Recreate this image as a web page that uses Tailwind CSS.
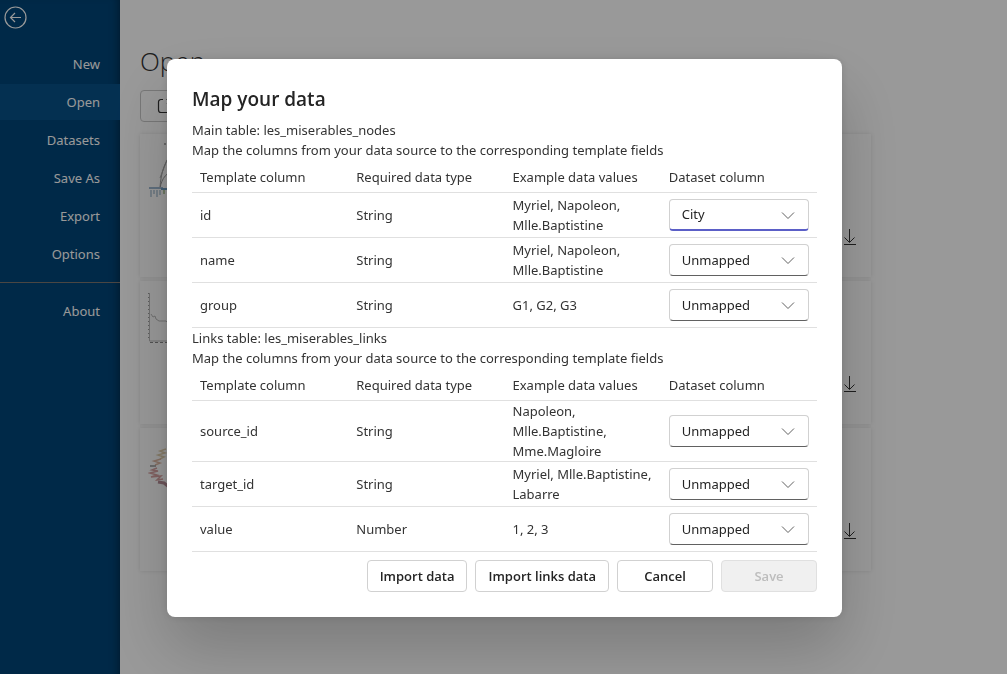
<!DOCTYPE html>
<html lang="en">
<head>
<meta charset="utf-8">
<title>Map your data</title>
<meta name="viewport" content="width=device-width, initial-scale=1">
<script src="https://cdn.jsdelivr.net/npm/@tailwindcss/browser@4"></script>
</head>
<body class="font-['Noto_Sans','Open_Sans',sans-serif] text-[13px] leading-5 text-[#333] bg-white">
<div class="flex min-h-screen">
  <nav class="w-[120px] shrink-0 bg-[#004578] text-white shadow-[inset_-8px_0_8px_-6px_rgba(0,0,0,0.35)]">
    <button type="button" aria-label="Back" class="ml-1 mt-1 block h-[26px] w-6">
      <svg class="h-6 w-6" viewBox="0 0 24 24" fill="none" stroke="currentColor" stroke-width="1.2"><circle cx="11.5" cy="12.5" r="10.5"/><path d="M17 12.5H6.500M11 8l-4.500 4.500 4.500 4.500"/></svg>
    </button>
    <ul class="mt-4 flex flex-col gap-0.5 text-right">
      <li><a href="#" class="block py-2 pr-5">New</a></li>
      <li><a href="#" class="block bg-[#085088] py-2 pr-5">Open</a></li>
      <li><a href="#" class="block py-2 pr-5">Datasets</a></li>
      <li><a href="#" class="block py-2 pr-5">Save As</a></li>
      <li><a href="#" class="block py-2 pr-5">Export</a></li>
      <li><a href="#" class="block py-2 pr-5">Options</a></li>
    </ul>
    <hr class="mt-2.5 border-[#7c7570]">
    <a href="#" class="mt-2.5 block py-2 pr-5 text-right">About</a>
  </nav>
  <main class="flex-1 px-5 pt-10">
    <h1 class="font-['Open_Sans',sans-serif] text-[26px] leading-[42px] font-light">Open</h1>
    <button type="button" aria-label="Open file" class="mt-2 flex h-8 w-24 items-center rounded-sm border border-[#c8c8c8] px-4">
      <svg class="h-4 w-4" viewBox="0 0 16 16" fill="none" stroke="currentColor" stroke-width="1.2"><path d="M6 1.500H4A2.500 2.500 0 0 0 1.500 4v8A2.500 2.500 0 0 0 4 14.500h8a2.500 2.500 0 0 0 2.500-2.500V9M9.500 1.500h5v5M14.500 1.500L10 6"/></svg>
    </button>
    <div class="mt-3 flex max-w-[731px] flex-col gap-1">
      <article class="flex h-[143px] items-start justify-between p-2 shadow-[0_0_4px_rgba(0,0,0,0.12)]">
        <svg class="h-[60px] w-[60px]" viewBox="0 0 60 60" fill="none"><path d="M12 46C13 30 16 20 28 5M12 46C14 36 18 30 30 27" stroke="#999"/><path d="M12 36L19 18" stroke="#aaa"/><circle cx="17" cy="2" r="1" fill="#999"/><path d="M1 46h14" stroke="#9fb9d2" stroke-width="2"/><path d="M13 47h8" stroke="#6f9fc4" stroke-width="2"/><path d="M3 48v7M6 48v4M9 48v7M12 48v5" stroke="#c3d3df" stroke-width="2"/><path d="M16 48v4" stroke="#b9cda6" stroke-width="2"/></svg>
        <button type="button" aria-label="Download" class="mt-[87px] mr-[5px]"><svg class="h-4 w-4" viewBox="0 0 16 16" fill="none" stroke="currentColor"><path d="M7.500 0v13M2.500 8.500l5 5 5-5M2 15.500h12"/></svg></button>
      </article>
      <article class="flex h-[143px] items-start justify-between p-2 shadow-[0_0_4px_rgba(0,0,0,0.12)]">
        <svg class="h-[60px] w-[60px]" viewBox="0 0 60 60" fill="none"><path d="M1.500 4v48H60" stroke="#bbb"/><path d="M0.500 4v48" stroke="#999" stroke-dasharray="1 3"/><path d="M2 53.500h58" stroke="#888" stroke-dasharray="3 2"/><path d="M3 25l2 3 2-1 1 3 3 2h7l2 2" stroke="#bbb"/></svg>
        <button type="button" aria-label="Download" class="mt-[87px] mr-[5px]"><svg class="h-4 w-4" viewBox="0 0 16 16" fill="none" stroke="currentColor"><path d="M7.500 0v13M2.500 8.500l5 5 5-5M2 15.500h12"/></svg></button>
      </article>
      <article class="flex h-[143px] items-start justify-between p-2 shadow-[0_0_4px_rgba(0,0,0,0.12)]">
        <svg class="h-[60px] w-[60px]" viewBox="0 0 60 60" fill="none"><path d="M18 13l-6 2 5 2-7 2 6 2-4 2" stroke="#e0cfae" stroke-width="1.5"/><path d="M13 23l-7 2 6 2-5 2" stroke="#dfb9a5" stroke-width="1.5"/><path d="M2 30h6" stroke="#999" stroke-width="1.500"/><path d="M9 32l-5 2 6 1-8 2 7 2-6 2 10-1-4 4 6-1" stroke="#d9a3a3" stroke-width="1.500"/><path d="M10 46l6 1 5 4" stroke="#b78f98" stroke-width="3"/></svg>
        <button type="button" aria-label="Download" class="mt-[87px] mr-[5px]"><svg class="h-4 w-4" viewBox="0 0 16 16" fill="none" stroke="currentColor"><path d="M7.500 0v13M2.500 8.500l5 5 5-5M2 15.500h12"/></svg></button>
      </article>
    </div>
  </main>
</div>

<div class="fixed inset-0 flex items-center justify-center bg-black/40 pt-0.5 pl-0.5">
  <section role="dialog" aria-modal="true" aria-labelledby="dialog-title" class="w-full max-w-[675px] rounded-lg bg-white p-[25px] shadow-[0_0_8px_rgba(0,0,0,0.12),0_32px_64px_rgba(0,0,0,0.2)]">
    <h2 id="dialog-title" class="mb-1.5 font-['Open_Sans',sans-serif] text-[19px] leading-[30px] font-semibold text-[#242424]">Map your data</h2>
    <p>Main table: les_miserables_nodes</p>
    <p>Map the columns from your data source to the corresponding template fields</p>
    <table class="w-full table-fixed border-collapse text-left">
      <thead>
        <tr class="h-8 border-b border-[#e0e0e0]"><th class="px-2 pt-0.5 font-normal">Template column</th><th class="px-2 pt-0.5 font-normal">Required data type</th><th class="px-2 pt-0.5 font-normal">Example data values</th><th class="px-2 pt-0.5 font-normal">Dataset column</th></tr>
      </thead>
      <tbody>
        <tr class="h-[45px] border-b border-[#e0e0e0]">
          <td class="px-2">id</td><td class="px-2">String</td><td class="px-2">Myriel, Napoleon, Mlle.Baptistine</td>
          <td class="px-2"><div class="relative"><select aria-label="Dataset column for id" class="block h-8 w-full appearance-none rounded-sm border border-b-2 border-[#d1d1d1] border-b-[#5b5fc7] bg-white px-3 text-[#242424]"><option>City</option></select><svg class="pointer-events-none absolute top-1.5 right-[11px] h-5 w-5" viewBox="0 0 20 20" fill="none" stroke="#616161"><path d="M4 7.500l6 6 6-6"/></svg></div></td>
        </tr>
        <tr class="h-[45px] border-b border-[#e0e0e0]">
          <td class="px-2">name</td><td class="px-2">String</td><td class="px-2">Myriel, Napoleon, Mlle.Baptistine</td>
          <td class="px-2"><div class="relative"><select aria-label="Dataset column for name" class="block h-8 w-full appearance-none rounded-sm border border-[#d1d1d1] border-b-[#616161] bg-white px-3 text-[#242424]"><option>Unmapped</option></select><svg class="pointer-events-none absolute top-1.5 right-[11px] h-5 w-5" viewBox="0 0 20 20" fill="none" stroke="#616161"><path d="M4 7.500l6 6 6-6"/></svg></div></td>
        </tr>
        <tr class="h-[45px] border-b border-[#e0e0e0]">
          <td class="px-2">group</td><td class="px-2">String</td><td class="px-2">G1, G2, G3</td>
          <td class="px-2"><div class="relative"><select aria-label="Dataset column for group" class="block h-8 w-full appearance-none rounded-sm border border-[#d1d1d1] border-b-[#616161] bg-white px-3 text-[#242424]"><option>Unmapped</option></select><svg class="pointer-events-none absolute top-1.5 right-[11px] h-5 w-5" viewBox="0 0 20 20" fill="none" stroke="#616161"><path d="M4 7.500l6 6 6-6"/></svg></div></td>
        </tr>
      </tbody>
    </table>
    <p>Links table: les_miserables_links</p>
    <p>Map the columns from your data source to the corresponding template fields</p>
    <table class="w-full table-fixed border-collapse text-left">
      <thead>
        <tr class="h-[33px] border-b border-[#e0e0e0]"><th class="px-2 pt-0.5 font-normal">Template column</th><th class="px-2 pt-0.5 font-normal">Required data type</th><th class="px-2 pt-0.5 font-normal">Example data values</th><th class="px-2 pt-0.5 font-normal">Dataset column</th></tr>
      </thead>
      <tbody>
        <tr class="h-[61px] border-b border-[#e0e0e0]">
          <td class="px-2">source_id</td><td class="px-2">String</td><td class="px-2">Napoleon, Mlle.Baptistine, Mme.Magloire</td>
          <td class="px-2"><div class="relative"><select aria-label="Dataset column for source_id" class="block h-8 w-full appearance-none rounded-sm border border-[#d1d1d1] border-b-[#616161] bg-white px-3 text-[#242424]"><option>Unmapped</option></select><svg class="pointer-events-none absolute top-1.5 right-[11px] h-5 w-5" viewBox="0 0 20 20" fill="none" stroke="#616161"><path d="M4 7.500l6 6 6-6"/></svg></div></td>
        </tr>
        <tr class="h-[45px] border-b border-[#e0e0e0]">
          <td class="px-2">target_id</td><td class="px-2">String</td><td class="px-2">Myriel, Mlle.Baptistine, Labarre</td>
          <td class="px-2"><div class="relative"><select aria-label="Dataset column for target_id" class="block h-8 w-full appearance-none rounded-sm border border-[#d1d1d1] border-b-[#616161] bg-white px-3 text-[#242424]"><option>Unmapped</option></select><svg class="pointer-events-none absolute top-1.5 right-[11px] h-5 w-5" viewBox="0 0 20 20" fill="none" stroke="#616161"><path d="M4 7.500l6 6 6-6"/></svg></div></td>
        </tr>
        <tr class="h-[45px] border-b border-[#e0e0e0]">
          <td class="px-2">value</td><td class="px-2">Number</td><td class="px-2">1, 2, 3</td>
          <td class="px-2"><div class="relative"><select aria-label="Dataset column for value" class="block h-8 w-full appearance-none rounded-sm border border-[#d1d1d1] border-b-[#616161] bg-white px-3 text-[#242424]"><option>Unmapped</option></select><svg class="pointer-events-none absolute top-1.5 right-[11px] h-5 w-5" viewBox="0 0 20 20" fill="none" stroke="#616161"><path d="M4 7.500l6 6 6-6"/></svg></div></td>
        </tr>
      </tbody>
    </table>
    <div class="mt-2 flex justify-end gap-2 font-['Open_Sans',sans-serif] font-semibold text-[#242424]">
      <button type="button" class="h-8 min-w-24 rounded-sm border border-[#d1d1d1] px-3">Import data</button>
      <button type="button" class="h-8 min-w-24 rounded-sm border border-[#d1d1d1] px-3">Import links data</button>
      <button type="button" class="h-8 min-w-24 rounded-sm border border-[#d1d1d1] px-3">Cancel</button>
      <button type="button" disabled class="h-8 min-w-24 rounded-sm border border-[#e0e0e0] bg-[#f0f0f0] px-3 text-[#bdbdbd]">Save</button>
    </div>
  </section>
</div>
</body>
</html>
